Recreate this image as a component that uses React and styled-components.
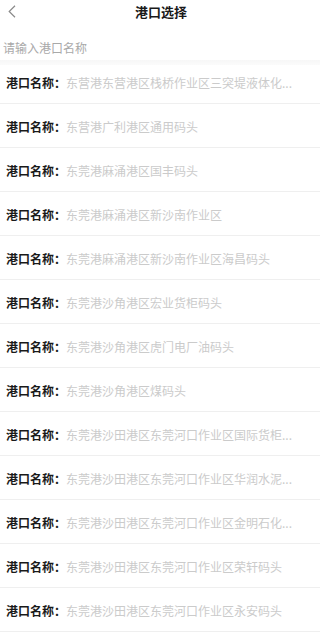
import React from "react";
import styled, { createGlobalStyle } from "styled-components";

const Global = createGlobalStyle`
  html, body { margin: 0; padding: 0; background: #fff; }
  body { font-family: "Noto Sans CJK SC", "Noto Sans", sans-serif; }
  * { box-sizing: border-box; }
`;

const Page = styled.div`
  width: 320px;
  height: 636px;
  overflow: hidden;
  background: #fff;
`;

const Header = styled.div`
  position: relative;
  height: 24px;
  display: flex;
  align-items: center;
  justify-content: center;
`;

const Back = styled.button`
  position: absolute;
  left: 5px;
  top: 3px;
  width: 14px;
  height: 16px;
  padding: 0;
  border: 0;
  background: none;
  display: flex;
  align-items: center;
  justify-content: center;
`;

const Title = styled.div`
  font-size: 13px;
  font-weight: 700;
  color: #1a1a1a;
  line-height: 24px;
  padding-left: 2px;
`;

const SearchBar = styled.div`
  padding: 10px 0 0 3px;
  height: 36px;
`;

const SearchInput = styled.input`
  width: 100%;
  height: 26px;
  border: 0;
  outline: none;
  padding: 0;
  font-family: inherit;
  font-size: 12px;
  color: #333;
  background: transparent;
  &::placeholder { color: #a9a9a9; }
`;

const List = styled.div`
  background: linear-gradient(#f7f7f7, #fbfbfb) top / 100% 5px no-repeat, #fff;
`;

const Row = styled.div`
  height: 44px;
  display: flex;
  align-items: center;
  padding: 1px 20px 0 6px;
  border-bottom: 1px solid #efefef;
  font-size: 12px;
  white-space: nowrap;
`;

const Label = styled.span`
  flex: none;
  font-weight: 700;
  color: #1a1a1a;
`;

const Value = styled.span`
  color: #cbcbcb;
`;

const ports = [
  "东营港东营港区栈桥作业区三突堤液体化...",
  "东营港广利港区通用码头",
  "东莞港麻涌港区国丰码头",
  "东莞港麻涌港区新沙南作业区",
  "东莞港麻涌港区新沙南作业区海昌码头",
  "东莞港沙角港区宏业货柜码头",
  "东莞港沙角港区虎门电厂油码头",
  "东莞港沙角港区煤码头",
  "东莞港沙田港区东莞河口作业区国际货柜...",
  "东莞港沙田港区东莞河口作业区华润水泥...",
  "东莞港沙田港区东莞河口作业区金明石化...",
  "东莞港沙田港区东莞河口作业区荣轩码头",
  "东莞港沙田港区东莞河口作业区永安码头",
];

export default function App() {
  return (
    <Page>
      <Global />
      <Header>
        <Back aria-label="返回">
          <svg width="8" height="13" viewBox="0 0 8 13">
            <path d="M7 0.8 L1.2 6.5 L7 12.2" fill="none" stroke="#8a8a8a" strokeWidth="1.2" />
          </svg>
        </Back>
        <Title>港口选择</Title>
      </Header>
      <SearchBar>
        <SearchInput placeholder="请输入港口名称" />
      </SearchBar>
      <List>
        {ports.map((p, i) => (
          <Row key={i}>
            <Label>港口名称：</Label>
            <Value>{p}</Value>
          </Row>
        ))}
      </List>
    </Page>
  );
}
